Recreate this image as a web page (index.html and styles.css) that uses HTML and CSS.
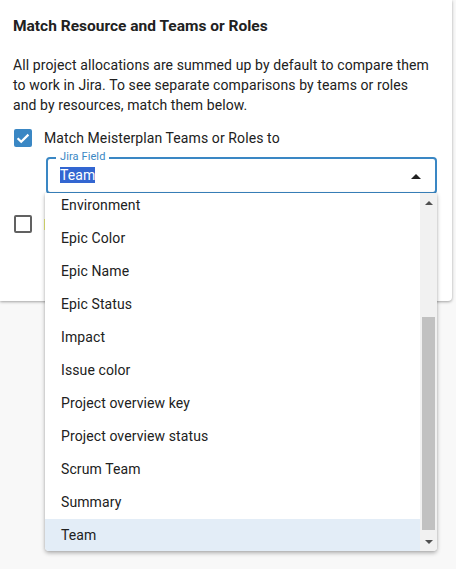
FILE: index.html
```html
<!DOCTYPE html>
<html>
<head>
<meta charset="utf-8">
<link rel="stylesheet" href="styles.css">
</head>
<body>
<div class="page">
  <div class="card">
    <h2 class="title">Match Resource and Teams or Roles</h2>
    <p class="desc">All project allocations are summed up by default to compare them to work in Jira. To see separate comparisons by teams or roles and by resources, match them below.</p>
    <div class="check-row">
      <span class="box checked">
        <svg viewBox="0 0 18 18" width="18" height="18"><path d="M3.6 9.2 L7.2 12.8 L14.4 5.6" fill="none" stroke="#fff" stroke-width="2.2"/></svg>
      </span>
      <span class="check-label">Match Meisterplan Teams or Roles to</span>
    </div>
    <div class="field">
      <span class="field-label">Jira Field</span>
      <span class="field-value"><span class="sel">Team</span></span>
      <span class="caret"></span>
    </div>
    <div class="check-row second">
      <span class="box"></span>
      <span class="hint"></span>
    </div>
  </div>
  <div class="menu">
    <ul class="list">
      <li>Environment</li>
      <li>Epic Color</li>
      <li>Epic Name</li>
      <li>Epic Status</li>
      <li>Impact</li>
      <li>Issue color</li>
      <li>Project overview key</li>
      <li>Project overview status</li>
      <li>Scrum Team</li>
      <li>Summary</li>
      <li class="active">Team</li>
    </ul>
    <div class="scrollbar">
      <span class="arrow up"></span>
      <span class="thumb"></span>
      <span class="arrow down"></span>
    </div>
  </div>
</div>
</body>
</html>
```
FILE: styles.css
```css
* { box-sizing: border-box; }
html, body { margin: 0; padding: 0; }
body {
  background: #f8f8f8;
  font-family: Roboto, "Liberation Sans", sans-serif;
  color: #212121;
  width: 456px;
  height: 569px;
  overflow: hidden;
  letter-spacing: 0.1px;
}
.page { position: relative; width: 456px; height: 569px; }
.card {
  width: 452px;
  height: 301px;
  background: #fff;
  border-bottom-right-radius: 4px;
  box-shadow: 0 1px 3px rgba(0,0,0,0.35);
  padding: 15px 13px 0 13px;
}
.title {
  margin: 0;
  font-size: 15.5px;
  font-weight: 700;
  line-height: 22px;
  letter-spacing: 0;
  color: #212121;
}
.desc {
  margin: 18px 0 0 0;
  width: 420px;
  font-size: 14px;
  line-height: 20px;
  color: #212121;
}
.check-row {
  display: flex;
  align-items: center;
  gap: 12px;
  margin-top: 13px;
  padding-left: 1px;
  height: 20px;
}
.check-row.second { margin-top: 20px; gap: 12px; }
.box {
  width: 18px;
  height: 18px;
  border: 2px solid #616161;
  border-radius: 2px;
  flex: none;
  display: flex;
}
.box.checked { background: #3a87c4; border: none; }
.check-label { font-size: 14px; line-height: 20px; }
.hint { display: block; width: 1px; height: 11px; background: #ecef7a; }
.field {
  position: relative;
  margin: 9px 0 0 33px;
  width: 391px;
  height: 37px;
  border: 2px solid #3a87c4;
  border-radius: 4px;
  display: flex;
  align-items: center;
  padding-left: 12px;
}
.field-label {
  position: absolute;
  left: 8px;
  top: -9px;
  padding: 0 4px;
  background: #fff;
  font-size: 11px;
  line-height: 14px;
  color: #3a87c4;
}
.field-value { font-size: 14px; line-height: 17px; }
.sel { background: #3366d1; color: #fff; }
.caret {
  position: absolute;
  right: 14px;
  top: 15px;
  width: 0; height: 0;
  border-left: 5px solid transparent;
  border-right: 5px solid transparent;
  border-bottom: 5px solid #212121;
}
.menu {
  position: absolute;
  left: 45px;
  top: 193px;
  width: 392px;
  height: 358px;
  background: #fff;
  border-radius: 0 0 4px 4px;
  box-shadow: 0 2px 4px rgba(0,0,0,0.3), 0 0 2px rgba(0,0,0,0.12);
  overflow: hidden;
  display: flex;
}
.list {
  list-style: none;
  margin: -4px 0 0 0;
  padding: 0;
  flex: 1;
}
.list li {
  height: 33px;
  line-height: 33px;
  padding-left: 16px;
  font-size: 14px;
  color: #212121;
}
.list li.active { background: #e3edf7; }
.scrollbar {
  width: 17px;
  background: #f1f1f1;
  display: flex;
  flex-direction: column;
  align-items: center;
  flex: none;
}
.arrow { width: 0; height: 0; border-left: 4px solid transparent; border-right: 4px solid transparent; }
.arrow.up { border-bottom: 4px solid #505050; margin-top: 8px; }
.arrow.down { border-top: 4px solid #505050; margin-top: 10px; }
.thumb { width: 13px; height: 213px; background: #c1c1c1; margin-top: 112px; }
```
